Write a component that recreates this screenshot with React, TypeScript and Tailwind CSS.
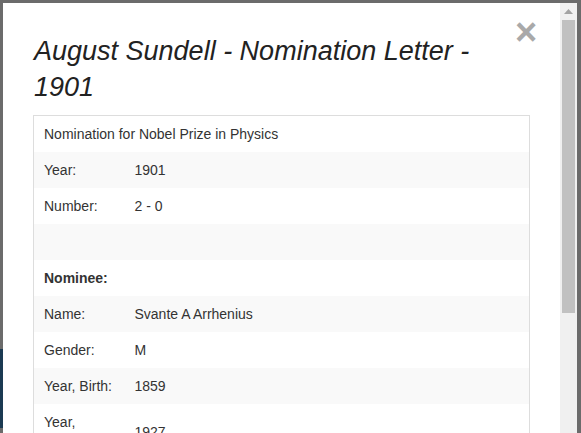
const rows: { label?: string; value?: string; bold?: boolean; full?: string }[] = [
  { full: 'Nomination for Nobel Prize in Physics' },
  { label: 'Year:', value: '1901' },
  { label: 'Number:', value: '2 - 0' },
  {},
  { label: 'Nominee:', bold: true },
  { label: 'Name:', value: 'Svante A Arrhenius' },
  { label: 'Gender:', value: 'M' },
  { label: 'Year, Birth:', value: '1859' },
  { label: 'Year, Death:', value: '1927' },
];

export default function App() {
  return (
    <div
      className="w-[581px] h-[433px] overflow-hidden bg-[#6b6b6b] flex flex-col"
      style={{ fontFamily: '"Liberation Sans", Arial, sans-serif' }}
    >
      <div className="h-[3px] shrink-0" />
      <div className="flex flex-1 min-h-0">
        {/* left edge of page behind the modal */}
        <div className="w-[3px] shrink-0 flex flex-col">
          <div className="h-[346px] shrink-0" />
          <div className="h-[79px] shrink-0 bg-[#1b3a52]" />
        </div>

        {/* modal body */}
        <div className="relative w-[557px] shrink-0 bg-white overflow-hidden pt-[30px]">
          <button className="absolute left-[512px] top-[10px] text-[38px] leading-none font-bold text-[#a9a9a9]">
            ×
          </button>
          <h4 className="pl-[31px] pr-[60px] text-[27px] leading-[36px] italic text-[#222]">
            August Sundell - Nomination Letter - 1901
          </h4>
          <table className="ml-[30px] mt-[10px] w-[497px] border border-[#ddd] border-collapse text-[14px] leading-[20px] text-[#333]">
            <tbody>
              {rows.map((r, i) => (
                <tr key={i} className={i % 2 === 1 ? 'bg-[#f9f9f9]' : 'bg-white'}>
                  {r.full ? (
                    <td colSpan={2} className="px-[10px] py-[8px] h-[36px]">
                      {r.full}
                    </td>
                  ) : (
                    <>
                      <td className={`pl-[10px] pr-[15px] py-[8px] h-[36px] w-[101px] ${r.bold ? 'font-bold' : ''}`}>
                        {r.label}
                      </td>
                      <td className="px-[0px] py-[8px] h-[36px]">{r.value}</td>
                    </>
                  )}
                </tr>
              ))}
            </tbody>
          </table>
        </div>

        {/* scrollbar */}
        <div className="w-[17px] shrink-0 bg-[#f0f0f0] flex flex-col items-center">
          <div className="h-[17px] shrink-0 flex items-center justify-center">
            <svg width="9" height="5" viewBox="0 0 9 5">
              <path d="M0 5 L4.5 0 L9 5 Z" fill="#a3a3a3" />
            </svg>
          </div>
          <div className="w-[13px] h-[293px] bg-[#c1c1c1]" />
        </div>
        <div className="flex-1" />
      </div>
    </div>
  );
}
